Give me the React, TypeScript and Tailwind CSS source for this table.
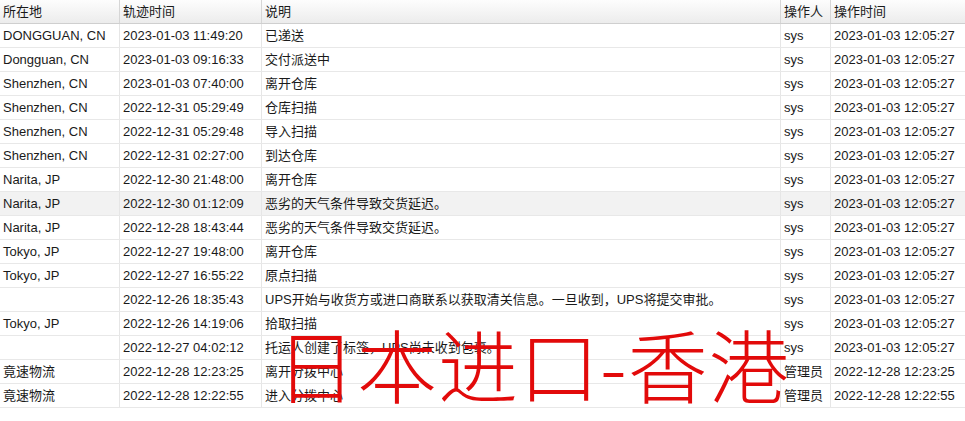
const rows = [
  ["DONGGUAN, CN", "2023-01-03 11:49:20", "已递送", "sys", "2023-01-03 12:05:27"],
  ["Dongguan, CN", "2023-01-03 09:16:33", "交付派送中", "sys", "2023-01-03 12:05:27"],
  ["Shenzhen, CN", "2023-01-03 07:40:00", "离开仓库", "sys", "2023-01-03 12:05:27"],
  ["Shenzhen, CN", "2022-12-31 05:29:49", "仓库扫描", "sys", "2023-01-03 12:05:27"],
  ["Shenzhen, CN", "2022-12-31 05:29:48", "导入扫描", "sys", "2023-01-03 12:05:27"],
  ["Shenzhen, CN", "2022-12-31 02:27:00", "到达仓库", "sys", "2023-01-03 12:05:27"],
  ["Narita, JP", "2022-12-30 21:48:00", "离开仓库", "sys", "2023-01-03 12:05:27"],
  ["Narita, JP", "2022-12-30 01:12:09", "恶劣的天气条件导致交货延迟。", "sys", "2023-01-03 12:05:27"],
  ["Narita, JP", "2022-12-28 18:43:44", "恶劣的天气条件导致交货延迟。", "sys", "2023-01-03 12:05:27"],
  ["Tokyo, JP", "2022-12-27 19:48:00", "离开仓库", "sys", "2023-01-03 12:05:27"],
  ["Tokyo, JP", "2022-12-27 16:55:22", "原点扫描", "sys", "2023-01-03 12:05:27"],
  ["", "2022-12-26 18:35:43", "UPS开始与收货方或进口商联系以获取清关信息。一旦收到，UPS将提交审批。", "sys", "2023-01-03 12:05:27"],
  ["Tokyo, JP", "2022-12-26 14:19:06", "拾取扫描", "sys", "2023-01-03 12:05:27"],
  ["", "2022-12-27 04:02:12", "托运人创建了标签，UPS尚未收到包裹。", "sys", "2023-01-03 12:05:27"],
  ["竟速物流", "2022-12-28 12:23:25", "离开分拨中心", "管理员", "2022-12-28 12:23:25"],
  ["竟速物流", "2022-12-28 12:22:55", "进入分拨中心", "管理员", "2022-12-28 12:22:55"],
];

const headers = ["所在地", "轨迹时间", "说明", "操作人", "操作时间"];
const widths = ["w-[120px]", "w-[142px]", "w-[519px]", "w-[50px]", "flex-1"];

export default function App() {
  return (
    <div
      className="relative w-[965px] h-[421px] bg-white overflow-hidden text-[#1a1a1a] text-[13px]"
      style={{ fontFamily: '"Liberation Sans", Arial, "Noto Sans CJK SC", sans-serif' }}
    >
      {/* header */}
      <div className="flex h-[24px] border-b border-[#cfcfcf] bg-gradient-to-b from-[#fdfdfd] to-[#ececec]">
        {headers.map((h, i) => (
          <div
            key={h}
            className={`${widths[i]} shrink-0 h-full flex items-center pl-[3px] whitespace-nowrap ${
              i < 4 ? "border-r border-[#d6d6d6]" : ""
            }`}
          >
            {h}
          </div>
        ))}
      </div>

      {/* body */}
      {rows.map((r, ri) => (
        <div
          key={ri}
          className={`flex h-[24px] border-b border-[#e8e8e8] ${ri === 7 ? "bg-[#f2f2f2]" : ""}`}
        >
          {r.map((c, ci) => (
            <div
              key={ci}
              className={`${widths[ci]} shrink-0 h-full flex items-center pl-[3px] whitespace-nowrap ${
                ci < 4 ? "border-r border-[#e6e6e6]" : ""
              }`}
            >
              {c}
            </div>
          ))}
        </div>
      ))}

      {/* watermark overlay */}
      <div
        className="absolute left-[276px] top-[322px] text-[80px] font-light leading-none text-[#e20a0a] whitespace-nowrap tracking-[1px]"
        style={{ fontFamily: '"Noto Sans CJK SC", sans-serif' }}
      >
        日本进口-香港
      </div>
    </div>
  );
}
